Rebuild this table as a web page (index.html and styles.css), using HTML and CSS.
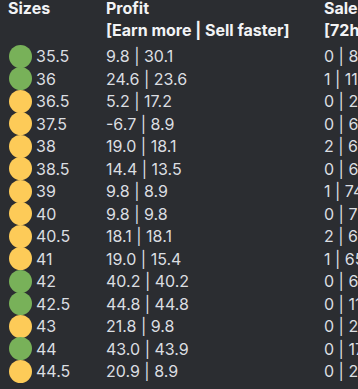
FILE: index.html
```html
<!DOCTYPE html>
<html>
<head>
<meta charset="utf-8">
<link rel="stylesheet" href="styles.css">
</head>
<body>
<div class="fields">
  <div class="field col-sizes">
    <div class="name">Sizes<br>&nbsp;</div>
    <div class="values">
      <div class="row"><span class="dot green"></span>35.5</div>
      <div class="row"><span class="dot green"></span>36</div>
      <div class="row"><span class="dot yellow"></span>36.5</div>
      <div class="row"><span class="dot yellow"></span>37.5</div>
      <div class="row"><span class="dot yellow"></span>38</div>
      <div class="row"><span class="dot yellow"></span>38.5</div>
      <div class="row"><span class="dot yellow"></span>39</div>
      <div class="row"><span class="dot yellow"></span>40</div>
      <div class="row"><span class="dot yellow"></span>40.5</div>
      <div class="row"><span class="dot yellow"></span>41</div>
      <div class="row"><span class="dot green"></span>42</div>
      <div class="row"><span class="dot green"></span>42.5</div>
      <div class="row"><span class="dot yellow"></span>43</div>
      <div class="row"><span class="dot green"></span>44</div>
      <div class="row"><span class="dot yellow"></span>44.5</div>
    </div>
  </div>
  <div class="field col-profit">
    <div class="name">Profit<br>[Earn more | Sell faster]</div>
    <div class="values">
      <div class="row">9.8 | 30.1</div>
      <div class="row">24.6 | 23.6</div>
      <div class="row">5.2 | 17.2</div>
      <div class="row">-6.7 | 8.9</div>
      <div class="row">19.0 | 18.1</div>
      <div class="row">14.4 | 13.5</div>
      <div class="row">9.8 | 8.9</div>
      <div class="row">9.8 | 9.8</div>
      <div class="row">18.1 | 18.1</div>
      <div class="row">19.0 | 15.4</div>
      <div class="row">40.2 | 40.2</div>
      <div class="row">44.8 | 44.8</div>
      <div class="row">21.8 | 9.8</div>
      <div class="row">43.0 | 43.9</div>
      <div class="row">20.9 | 8.9</div>
    </div>
  </div>
  <div class="field col-sales">
    <div class="name">Sales<br>[72h | 30d]</div>
    <div class="values">
      <div class="row">0 | 8</div>
      <div class="row">1 | 11</div>
      <div class="row">0 | 24</div>
      <div class="row">0 | 61</div>
      <div class="row">2 | 63</div>
      <div class="row">0 | 67</div>
      <div class="row">1 | 74</div>
      <div class="row">0 | 77</div>
      <div class="row">2 | 69</div>
      <div class="row">1 | 65</div>
      <div class="row">0 | 60</div>
      <div class="row">0 | 11</div>
      <div class="row">0 | 26</div>
      <div class="row">0 | 17</div>
      <div class="row">0 | 29</div>
    </div>
  </div>
</div>
</body>
</html>
```
FILE: styles.css
```css
html, body {
  margin: 0;
  padding: 0;
  background: #2b2d31;
  overflow: hidden;
}
body {
  font-family: Inter, "Noto Sans", sans-serif;
  font-size: 16px;
  color: #dbdee1;
}
.fields {
  display: grid;
  grid-template-columns: 98px 218px 200px;
  margin-top: -3.5px;
  padding-left: 8px;
  white-space: nowrap;
}
.name {
  font-weight: 700;
  color: #f2f3f5;
  line-height: 22.5px;
  margin-bottom: 3.5px;
}
.row {
  height: 22.5px;
  line-height: 22.5px;
  display: flex;
  align-items: center;
}
.dot {
  width: 23px;
  height: 23px;
  border-radius: 50%;
  margin: 0 4px 0 1px;
  flex: none;
}
.green { background: #78b159; }
.yellow { background: #fdcb58; }
```
